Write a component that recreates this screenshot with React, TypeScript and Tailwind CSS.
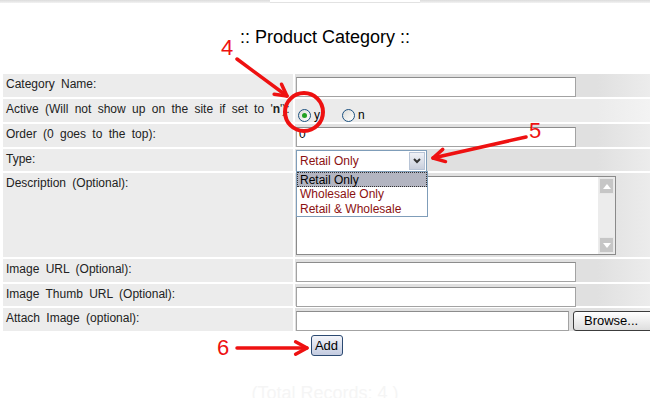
import React from 'react';

const font = "font-['Liberation_Sans',Arial,sans-serif]";

const Arrow = ({ x1, y1, x2, y2 }: { x1: number; y1: number; x2: number; y2: number }) => {
    const a = Math.atan2(y2 - y1, x2 - x1);
    const len = 13;
    const p1 = [x2 - len * Math.cos(a - 0.5), y2 - len * Math.sin(a - 0.5)];
    const p2 = [x2 - len * Math.cos(a + 0.5), y2 - len * Math.sin(a + 0.5)];
    return (
        <g stroke="#ee1111" strokeWidth={3.5} strokeLinecap="round" fill="none">
            <line x1={x1} y1={y1} x2={x2} y2={y2} />
            <polyline points={`${p1[0]},${p1[1]} ${x2},${y2} ${p2[0]},${p2[1]}`} strokeLinejoin="round" />
        </g>
    );
};

const TextBox = ({ w = 280, value }: { w?: number; value?: string }) => (
    <div
        className="h-[20px] border border-[#a3a3a3] border-t-[#8c8c8c] bg-white text-[12px] leading-[12px] pl-[2px] text-black"
        style={{ width: w }}
    >
        {value}
    </div>
);

const Row = ({ label, children, h = 23, light = false }: { label: React.ReactNode; children?: React.ReactNode; h?: number; light?: boolean }) => (
    <div className="flex gap-[2px]" style={{ height: h }}>
        <div className="w-[290px] shrink-0 bg-[#ececec] pl-[3px] pt-[3px] text-[12px] leading-[14px] text-[#222] [word-spacing:3px]">
            {label}
        </div>
        <div
            className={
                light
                    ? 'flex-1 pl-[1px] pt-[3px] bg-[linear-gradient(to_right,#ebebeb_85%,#f3f3f3)]'
                    : 'flex-1 pl-[1px] pt-[3px] bg-[linear-gradient(to_right,#e0e0e0_85%,#ececec)]'
            }
        >
            {children}
        </div>
    </div>
);

const Radio = ({ checked, label }: { checked?: boolean; label: string }) => (
    <div className="flex items-center gap-[3px]">
        <div className="w-[13px] h-[13px] rounded-full border border-[#1c5180] bg-[linear-gradient(135deg,#dcdcd7,#ffffff)] flex items-center justify-center">
            {checked && <div className="w-[5px] h-[5px] rounded-full bg-[#21a121]" />}
        </div>
        <span className="text-[12px] text-black">{label}</span>
    </div>
);

const ScrollBtn = ({ up }: { up?: boolean }) => (
    <div className="w-[15px] h-[16px] bg-[#c6c6c6] border border-[#e8e8e8] flex items-center justify-center">
        <svg width="8" height="5" viewBox="0 0 8 5">
            <polygon points={up ? '0,5 4,0 8,5' : '0,0 4,5 8,0'} fill="#ffffff" />
        </svg>
    </div>
);

export default function App() {
    return (
        <div className={`relative w-[650px] h-[398px] bg-white overflow-hidden ${font}`}>
            {/* top strip */}
            <div className="flex h-[3px]">
                <div className="w-[270px] bg-[linear-gradient(#dcdcdc,#f2f2f2)]" />
                <div className="w-[150px] border-b border-[#e2e2e2]" />
                <div className="flex-1 bg-[linear-gradient(#dcdcdc,#f2f2f2)]" />
            </div>

            <h1 className="mt-[23px] text-center text-[18px] leading-[22px] text-black">:: Product Category ::</h1>

            {/* form */}
            <div className="mt-[26px] ml-[3px] flex flex-col gap-[2px]">
                <Row label="Category Name:">
                    <TextBox />
                </Row>
                <Row label={<>Active (Will not show up on the site if set to '<b className="font-bold">n</b>'):</>} light>
                    <div className="flex items-center gap-[22px] pl-[2px] pt-[4px]">
                        <Radio checked label="y" />
                        <Radio label="n" />
                    </div>
                </Row>
                <Row label="Order (0 goes to the top):">
                    <TextBox value="0" />
                </Row>
                <Row label="Type:" h={22}>
                    <div className="-mt-[2px] w-[131px] h-[22px] border border-[#7f9db9] bg-white flex items-center justify-between">
                        <span className="pl-[3px] text-[12px] text-[#8b1111]">Retail Only</span>
                        <div className="w-[16px] h-[18px] mr-[1px] border border-[#b8c4d6] bg-[linear-gradient(#f0f2f7,#c9cfdc)] flex items-center justify-center">
                            <svg width="8" height="6" viewBox="0 0 8 6">
                                <polyline points="1,1 4,4 7,1" stroke="#333" strokeWidth="2" fill="none" />
                            </svg>
                        </div>
                    </div>
                </Row>
                <Row label="Description (Optional):" h={84}>
                    <div className="w-[320px] h-[79px] border border-[#8a8a8a] bg-white flex justify-end">
                        <div className="w-[17px] bg-[#ececec] flex flex-col justify-between items-center py-[1px]">
                            <ScrollBtn up />
                            <ScrollBtn />
                        </div>
                    </div>
                </Row>
                <Row label="Image URL (Optional):">
                    <TextBox />
                </Row>
                <Row label="Image Thumb URL (Optional):" h={22}>
                    <TextBox />
                </Row>
                <Row label="Attach Image (optional):">
                    <div className="flex gap-[4px] items-start">
                        <TextBox w={273} />
                        <button className="h-[20px] w-[82px] rounded-[3px] border border-[#3c3c3c] bg-[linear-gradient(#ffffff,#dedede)] text-[13px] leading-[16px] text-black text-left pl-[10px]">
                            Browse...
                        </button>
                    </div>
                </Row>
            </div>

            <div className="flex justify-center mt-[4px] ml-[3px]">
                <button className="w-[32px] h-[21px] rounded-[3px] border border-[#2c4a72] bg-[linear-gradient(#f4f5fa,#c3cbe0)] text-[13px] leading-[16px] text-black">
                    Add
                </button>
            </div>

            <div className="mt-[24px] text-center text-[18px] text-[#f5f5f5]">(Total Records: 4 )</div>

            {/* open dropdown list */}
            <div className="absolute left-[296px] top-[171px] w-[132px] h-[46px] border border-[#7f9db9] bg-white text-[12px] leading-[14px]">
                <div className="h-[15px] bg-[#b3b5c1] border border-dotted border-[#333] pl-[2px] text-black">Retail Only</div>
                <div className="h-[15px] pl-[3px] text-[#8b1111]">Wholesale Only</div>
                <div className="h-[14px] pl-[3px] text-[#8b1111]">Retail &amp; Wholesale</div>
            </div>

            {/* annotations */}
            <span className="absolute left-[221px] top-[36px] text-[22px] leading-[24px] text-[#ee1111]">4</span>
            <span className="absolute left-[529px] top-[119px] text-[22px] leading-[24px] text-[#ee1111]">5</span>
            <span className="absolute left-[217px] top-[336px] text-[22px] leading-[24px] text-[#ee1111]">6</span>
            <svg className="absolute inset-0 pointer-events-none" width="650" height="398">
                <Arrow x1={237} y1={59} x2={287} y2={96} />
                <Arrow x1={526} y1={137} x2={433} y2={158} />
                <Arrow x1={237} y1={348} x2={307} y2={348} />
                <ellipse cx={304} cy={112} rx={19} ry={19} stroke="#ee1111" strokeWidth={4} fill="none" />
            </svg>
        </div>
    );
}
